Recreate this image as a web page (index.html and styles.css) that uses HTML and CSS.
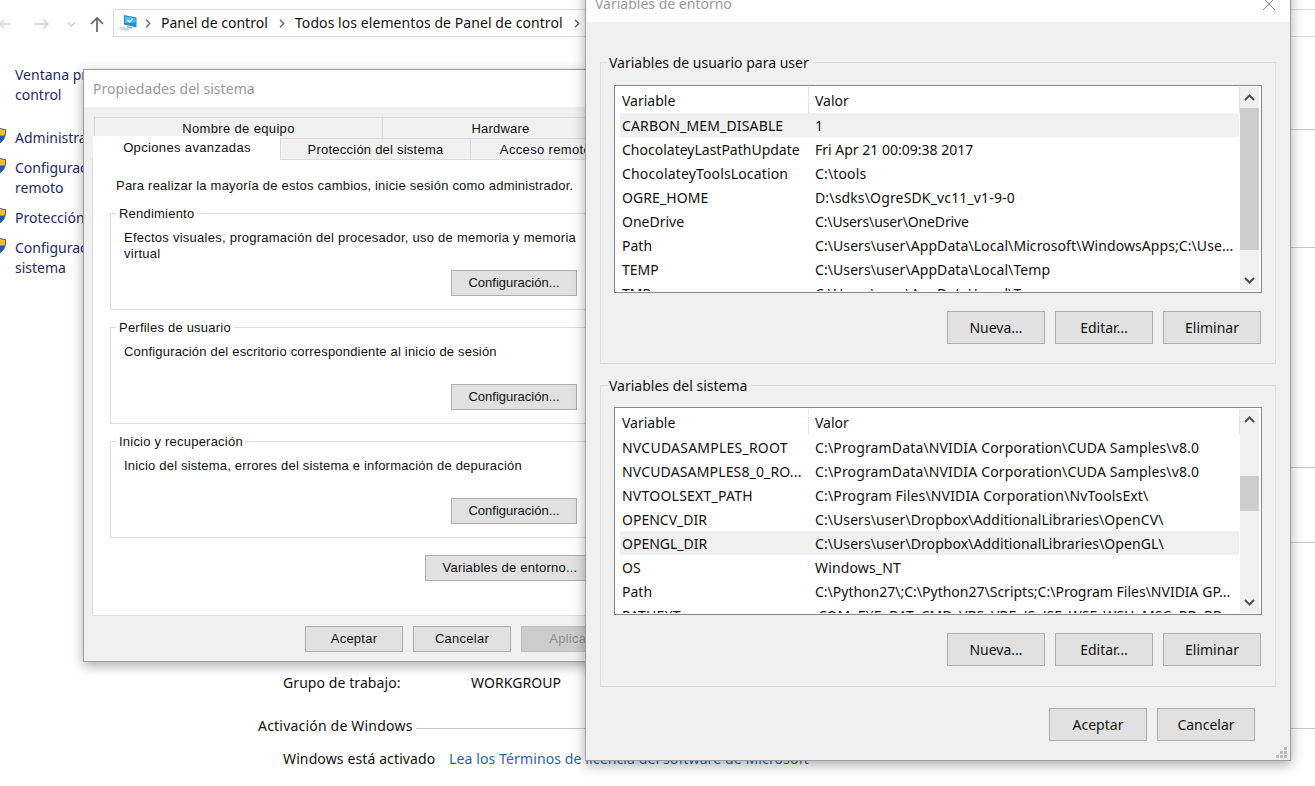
FILE: index.html
```html
<!DOCTYPE html>
<html lang="es">
<head>
<meta charset="utf-8">
<title>Variables de entorno</title>
<link rel="stylesheet" href="styles.css">
</head>
<body>
<div class="desktop">
  <header class="navbar">
    <svg class="nav-icons" width="113" height="40" viewBox="0 0 113 40" fill="none">
      <path d="M0 24H10M0 24L4 20M0 24L4 28" stroke="#d2d2d2" stroke-width="1.3"/>
      <path d="M34 24H48M43 19L48 24L43 29" stroke="#d0d0d0" stroke-width="1.3"/>
      <path d="M68 22.5L71.5 26L75 22.5" stroke="#cfcfcf" stroke-width="1.3"/>
      <path d="M97 32V18M91 24L97 18L103 24" stroke="#686868" stroke-width="1.7"/>
    </svg>
    <nav class="address">
      <svg class="pc" width="20" height="18" viewBox="0 0 20 18">
        <path d="M6 1L18.500 3.500V13.500L6 10.500Z" fill="#1f8fd4"/>
        <path d="M7 2.200L17.500 4.500V8.500L7 9Z" fill="#55bdf0"/>
        <path d="M9.500 6L11.500 8L14.500 4.800" fill="none" stroke="#fff" stroke-width="1.300"/>
        <path d="M0 14.500L5 12.500L13 15L9 17.500Z" fill="#d4d7da"/>
        <path d="M9 12L14 13.200V14.500L9 13.500Z" fill="#9aa3aa"/>
      </svg>
      <svg class="sep s1" width="6" height="9" viewBox="0 0 6 9"><path d="M1 .8L4.700 4.500L1 8.200"/></svg>
      <span class="crumb c1">Panel de control</span>
      <svg class="sep s2" width="6" height="9" viewBox="0 0 6 9"><path d="M1 .8L4.700 4.500L1 8.200"/></svg>
      <span class="crumb c2">Todos los elementos de Panel de control</span>
      <svg class="sep s3" width="6" height="9" viewBox="0 0 6 9"><path d="M1 .8L4.700 4.500L1 8.200"/></svg>
    </nav>
  </header>
  <div class="content">
    <aside class="side">
      <a class="home">Ventana principal del Panel de control</a>
      <a><svg class="shield" width="14" height="17" viewBox="0 0 14 17"><use href="#shield"/></svg>Administrador de dispositivos</a>
      <a><svg class="shield" width="14" height="17" viewBox="0 0 14 17"><use href="#shield"/></svg>Configuración de acceso<br>remoto</a>
      <a><svg class="shield" width="14" height="17" viewBox="0 0 14 17"><use href="#shield"/></svg>Protección del sistema</a>
      <a><svg class="shield" width="14" height="17" viewBox="0 0 14 17"><use href="#shield"/></svg>Configuración avanzada del<br>sistema</a>
      <svg width="0" height="0"><defs><g id="shield">
        <path d="M7 .5C5 2 3 2.500 .5 2.500C.3 9 1.500 13.500 7 16.500C12.500 13.500 13.700 9 13.500 2.500C11 2.500 9 2 7 .5Z" fill="#1b5da6"/>
        <path d="M7 .5C9 2 11 2.500 13.500 2.500Q13.500 6 12.900 8.500H7Z" fill="#fbbd2c"/>
        <path d="M7 .5C5 2 3 2.500 .5 2.500C.3 9 1.500 13.500 7 16.500C12.500 13.500 13.700 9 13.500 2.500C11 2.500 9 2 7 .5Z" fill="none" stroke="#4b5866"/>
      </g></defs></svg>
    </aside>
    <main class="info">
      <section class="h118"></section>
      <section class="h220"></section>
      <section class="h75"></section>
      <section class="group-row"><span>Grupo de trabajo:</span><span class="wg">WORKGROUP</span></section>
      <h2>Activación de Windows</h2>
      <p><span class="act">Windows está activado</span><a>Lea los Términos de licencia del software de Microsoft</a></p>
    </main>
  </div>
</div>

<div class="dialog props">
  <div class="title">Propiedades del sistema</div>
  <div class="tabs">
    <div class="tabrow back"><span class="tab t-name">Nombre de equipo</span><span class="tab t-hw">Hardware</span></div>
    <div class="tabrow front"><span class="tab active">Opciones avanzadas</span><span class="tab t-prot">Protección del sistema</span><span class="tab t-rem">Acceso remoto</span></div>
  </div>
  <div class="sheet">
    <p class="note">Para realizar la mayoría de estos cambios, inicie sesión como administrador.</p>
    <fieldset><legend>Rendimiento</legend><p class="effects">Efectos visuales, programación del procesador, uso de memoria y memoria virtual</p><span class="btn">Configuración...</span></fieldset>
    <fieldset><legend>Perfiles de usuario</legend><p>Configuración del escritorio correspondiente al inicio de sesión</p><span class="btn">Configuración...</span></fieldset>
    <fieldset><legend>Inicio y recuperación</legend><p>Inicio del sistema, errores del sistema e información de depuración</p><span class="btn">Configuración...</span></fieldset>
    <span class="btn env">Variables de entorno...</span>
  </div>
  <div class="foot"><span class="btn">Aceptar</span><span class="btn">Cancelar</span><span class="btn off">Aplicar</span></div>
</div>

<div class="dialog vars">
  <div class="title"><span>Variables de entorno</span>
    <svg width="14" height="14" viewBox="0 0 14 14"><path d="M1 1L13 13M13 1L1 13" stroke="#888" fill="none"/></svg>
  </div>
  <div class="box">
    <div class="caption">Variables de usuario para user</div>
    <div class="list">
      <div class="table">
        <div class="row head"><span>Variable</span><span>Valor</span></div>
        <div class="row sel"><span class="wide">CARBON_MEM_DISABLE</span><span>1</span></div>
        <div class="row"><span>ChocolateyLastPathUpdate</span><span>Fri Apr 21 00:09:38 2017</span></div>
        <div class="row"><span class="wide">ChocolateyToolsLocation</span><span class="wide">C:\tools</span></div>
        <div class="row"><span class="semi">OGRE_HOME</span><span class="wide">D:\sdks\OgreSDK_vc11_v1-9-0</span></div>
        <div class="row"><span>OneDrive</span><span class="tight">C:\Users\user\OneDrive</span></div>
        <div class="row"><span>Path</span><span class="semi">C:\Users\user\AppData\Local\Microsoft\WindowsApps;C:\Use...</span></div>
        <div class="row"><span>TEMP</span><span class="semi">C:\Users\user\AppData\Local\Temp</span></div>
        <div class="row"><span>TMP</span><span class="semi">C:\Users\user\AppData\Local\Temp</span></div>
      </div>
      <div class="scroll">
        <svg width="19" height="20" viewBox="0 0 19 20"><path d="M5 13L9.500 8.500L14 13"/></svg>
        <div class="track"><div class="thumb user"></div></div>
        <svg width="19" height="20" viewBox="0 0 19 20"><path d="M5 7L9.500 11.500L14 7"/></svg>
      </div>
    </div>
    <div class="actions"><span class="btn">Nueva...</span><span class="btn">Editar...</span><span class="btn">Eliminar</span></div>
  </div>
  <div class="box second">
    <div class="caption">Variables del sistema</div>
    <div class="list">
      <div class="table">
        <div class="row head"><span>Variable</span><span>Valor</span></div>
        <div class="row"><span class="wider">NVCUDASAMPLES_ROOT</span><span class="wide">C:\ProgramData\NVIDIA Corporation\CUDA Samples\v8.0</span></div>
        <div class="row"><span class="wide">NVCUDASAMPLES8_0_RO...</span><span class="wide">C:\ProgramData\NVIDIA Corporation\CUDA Samples\v8.0</span></div>
        <div class="row"><span class="wider">NVTOOLSEXT_PATH</span><span class="wide">C:\Program Files\NVIDIA Corporation\NvToolsExt\</span></div>
        <div class="row"><span>OPENCV_DIR</span><span class="semi">C:\Users\user\Dropbox\AdditionalLibraries\OpenCV\</span></div>
        <div class="row sel"><span>OPENGL_DIR</span><span class="semi">C:\Users\user\Dropbox\AdditionalLibraries\OpenGL\</span></div>
        <div class="row"><span>OS</span><span class="wide">Windows_NT</span></div>
        <div class="row"><span>Path</span><span>C:\Python27\;C:\Python27\Scripts;C:\Program Files\NVIDIA GP...</span></div>
        <div class="row"><span class="wide">PATHEXT</span><span>.COM;.EXE;.BAT;.CMD;.VBS;.VBE;.JS;.JSE;.WSF;.WSH;.MSC;.RB;.RB...</span></div>
      </div>
      <div class="scroll">
        <svg width="19" height="20" viewBox="0 0 19 20"><path d="M5 13L9.500 8.500L14 13"/></svg>
        <div class="track"><div class="thumb system"></div></div>
        <svg width="19" height="20" viewBox="0 0 19 20"><path d="M5 7L9.500 11.500L14 7"/></svg>
      </div>
    </div>
    <div class="actions"><span class="btn">Nueva...</span><span class="btn">Editar...</span><span class="btn">Eliminar</span></div>
  </div>
  <div class="confirm"><span class="btn">Aceptar</span><span class="btn">Cancelar</span></div>
  <svg class="grip" width="12" height="12" viewBox="0 0 12 12" fill="#bcbcbc"><path d="M8 0h3v3h-3zM4 4h3v3h-3zM8 4h3v3h-3zM0 8h3v3h-3zM4 8h3v3h-3zM8 8h3v3h-3z"/></svg>
</div>
</body>
</html>
```
FILE: styles.css
```css
* { box-sizing: border-box; }
body {
  margin: 0; width: 1315px; height: 786px; overflow: hidden; position: relative;
  background: #fff; color: #111; font: 14px/20px "Noto Sans", sans-serif;
}
p, h2, fieldset { margin: 0; padding: 0; border: 0; font-size: inherit; font-weight: normal; }
svg { flex: none; display: block; }
span { white-space: nowrap; }

/* Control panel window behind the dialogs */
.desktop { height: 786px; overflow: hidden; }
.navbar { display: flex; height: 65px; }
.address {
  display: flex; align-items: center; width: 1220px; flex: none; height: 28px; margin-top: 9px;
  border: 1px solid #d9d9d9; padding-left: 4px;
}
.sep path { fill: none; stroke: #666; stroke-width: 1.4; }
.s1 { margin-left: 7px; }
.c1 { width: 107px; margin-left: 10px; }
.s2 { margin-left: 11px; }
.c2 { width: 268px; margin-left: 10px; letter-spacing: .07px; }
.s3 { margin-left: 11px; }
.content { display: flex; }
.side { width: 258px; padding-left: 15px; display: flex; flex-direction: column; gap: 10px; flex: none; color: #1f2a66; }
.side a { position: relative; display: block; white-space: nowrap; }
.side .home { margin-bottom: 13px; width: 200px; white-space: normal; }
.shield { position: absolute; left: -23px; top: -1px; }
.info { flex: 1; padding-top: 64px; }
.info section { border-top: 1px solid #c9c9c9; }
.h118 { height: 118px; }
.h220 { height: 220px; }
.h75 { height: 75px; }
.group-row { height: 174px; padding: 130px 0 0 25px; display: flex; letter-spacing: .08px; }
.group-row span:first-child { width: 188px; }
.info h2 { display: flex; align-items: center; gap: 3px; height: 20px; white-space: nowrap; letter-spacing: .2px; }
.info h2::after { content: ""; flex: 1; border-top: 1px solid #c9c9c9; margin-top: 5px; }
.info p { display: flex; margin: 13px 0 0 25px; white-space: nowrap; letter-spacing: .12px; }
.act { width: 166px; }
.info a { color: #1f65b5; }

/* Shared dialog parts */
.dialog { position: absolute; background: #f0f0f0; border: 1px solid #9c9c9c; box-shadow: 0 4px 12px rgba(0,0,0,.32); }
.title { background: #fff; color: #999; }
.btn { display: flex; align-items: center; justify-content: center; flex: none; background: #e1e1e1; border: 1px solid #adadad; }

/* System properties */
.props { left: 83px; top: 69px; width: 620px; height: 593px; font: 13px/16px "Liberation Sans", sans-serif; }
.props .title { height: 37px; padding: 9px 9px; font: 14px/20px "Noto Sans", sans-serif; letter-spacing: .05px; }
.tabs { margin: 10px 0 0 9px; }
.tabrow { display: flex; letter-spacing: .35px; }
.tab { display: flex; justify-content: center; align-items: center; flex: none; border: 1px solid #d9d9d9; border-width: 1px 0 0 1px; height: 21px; }
.back { margin-left: 1px; }
.back .tab { padding-top: 2px; }
.t-name { width: 288px; }
.t-hw { width: 236px; letter-spacing: .2px; }
.active { position: relative; width: 187px; height: 26px; margin-top: -2px; margin-bottom: -3px; padding-bottom: 4px; background: #fff; border-color: #fff; }
.t-prot { width: 190px; height: 22px; letter-spacing: .23px; }
.t-rem { width: 150px; height: 22px; }
.sheet { height: 457px; margin: -1px 12px 0 8px; background: #fff; border: 1px solid #dcdcdc; border-right: 0; padding: 18px 0 0 17px; }
.note { height: 20px; padding-left: 6px; white-space: nowrap; letter-spacing: .21px; }
.sheet fieldset { height: 97px; margin: 15px 0 17px; border: 1px solid #dcdcdc; position: relative; padding: 16px 0 0 13px; width: 510px; }
.sheet fieldset + fieldset { margin-top: 0; }
.sheet legend { position: absolute; left: 5px; top: -8px; padding: 0 3px; background: #fff; letter-spacing: .22px; }
.sheet fieldset p { width: 470px; height: 40px; letter-spacing: .19px; }
.sheet fieldset .effects { letter-spacing: .25px; }
.sheet fieldset .btn { margin-left: 327px; width: 126px; height: 26px; }
.env { width: 170px; height: 26px; margin-left: 315px; letter-spacing: .22px; }
.foot { display: flex; gap: 10px; margin: 10px 0 0 221px; letter-spacing: .25px; }
.foot .btn { width: 98px; height: 26px; }
.foot .off { background: #ccc; border-color: #bfbfbf; color: #8d8d8d; }

/* Environment variables */
.vars { left: 585px; top: -28px; width: 706px; height: 789px; }
.vars .title { height: 49px; padding: 21px 14px 0 9px; display: flex; justify-content: space-between; }
.vars .title svg { margin-top: 3px; }
.box { position: relative; margin: 40px 14px 0; height: 302px; border: 1px solid #dcdcdc; padding: 22px 13px 0; }
.box.second { margin-top: 21px; padding-top: 21px; }
.caption { position: absolute; left: 6px; top: -10px; padding: 0 3px 0 2px; background: #f0f0f0; }
.list { display: flex; height: 208px; border: 1px solid #828790; background: #fff; padding: 1px 2px 1px 5px; overflow: hidden; }
.table { width: 620px; height: 204px; overflow: hidden; }
.row { display: flex; height: 24px; line-height: 26px; }
.row span { padding-left: 2px; }
.row span:first-child { width: 188px; margin-right: 5px; flex: none; }
.row.head { height: 26px; line-height: 27px; border-right: 1px solid #e5e5e5; }
.row.head span:first-child { border-right: 1px solid #e5e5e5; width: 189px; margin-right: 4px; }
.row.sel { background: #f0f0f0; width: 619px; }
.row .tight { letter-spacing: -.13px; }
.row .semi { letter-spacing: .08px; }
.row .wide { letter-spacing: .15px; }
.row .wider { letter-spacing: .23px; }
.scroll { width: 19px; background: #f0f0f0; display: flex; flex-direction: column; }
.scroll path { fill: none; stroke: #505050; stroke-width: 2; }
.track { flex: 1; }
.thumb { background: #cdcdcd; }
.thumb.user { height: 142px; margin-top: 1px; }
.thumb.system { height: 35px; margin-top: 47px; }
.actions { display: flex; justify-content: flex-end; gap: 10px; margin: 18px 1px 0 0; }
.vars .btn { width: 98px; height: 33px; }
.confirm { display: flex; gap: 10px; justify-content: flex-end; margin: 21px 35px 0 0; }
.grip { position: absolute; right: 2px; bottom: 1px; }
```
